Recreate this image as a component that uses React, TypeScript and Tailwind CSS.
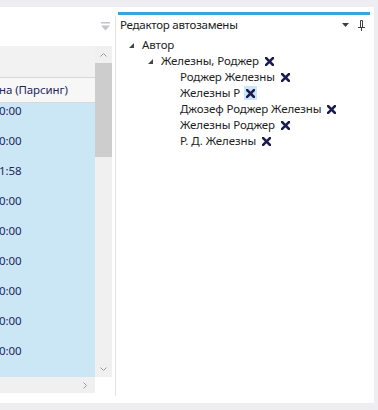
import React from "react";

const font = { fontFamily: '"Noto Sans", "DejaVu Sans", sans-serif' };

const RemoveIcon = () => (
  <svg width="9" height="9" viewBox="0 0 9 9" className="block">
    <path d="M1 1 L8 8 M8 1 L1 8" stroke="#1d1d4e" strokeWidth="2.5" strokeLinecap="square" />
  </svg>
);

const Expander = () => (
  <span className="flex h-[16px] w-[15px] shrink-0 items-center pl-[2px]">
    <svg width="5" height="5" viewBox="0 0 5 5" className="block">
      <polygon points="5,0 5,5 0,5" fill="#444444" />
    </svg>
  </span>
);

type Node = { label: string; level: number; expander?: boolean; remove?: boolean; selected?: boolean };

const nodes: Node[] = [
  { label: "Автор", level: 0, expander: true },
  { label: "Железны, Роджер", level: 1, expander: true, remove: true },
  { label: "Роджер Железны", level: 2, remove: true },
  { label: "Железны Р", level: 2, remove: true, selected: true },
  { label: "Джозеф Роджер Железны", level: 2, remove: true },
  { label: "Железны Роджер", level: 2, remove: true },
  { label: "Р. Д. Железны", level: 2, remove: true },
];

const TreeRow = ({ node }: { node: Node }) => {
  const indent = ["pl-[11px]", "pl-[30px]", "pl-[49px]"][node.level];
  return (
    <div className={`flex h-[16px] items-center ${indent}`}>
      {node.expander ? <Expander /> : <span className="w-[15px] shrink-0" />}
      <span className="whitespace-nowrap text-[11.5px] leading-[16px] tracking-[-0.1px] text-[#1e1e1e]">
        {node.label}
      </span>
      {node.remove && (
        <span
          className={`ml-[4px] flex h-[14px] w-[13px] items-center justify-center ${
            node.selected ? "bg-[#c9e6fb]" : ""
          }`}
        >
          <RemoveIcon />
        </span>
      )}
    </div>
  );
};

const times = ["0:00", "0:00", "1:58", "0:00", "0:00", "0:00", "0:00", "0:00", "0:00"];

const Chevron = ({ dir }: { dir: "up" | "down" | "right" }) => {
  const d =
    dir === "up"
      ? "M0.5 4.5 L3.5 1.5 L6.5 4.5"
      : dir === "down"
      ? "M0.5 1.5 L3.5 4.5 L6.5 1.5"
      : "M1.5 0.5 L4.5 3.5 L1.5 6.5";
  const size = dir === "right" ? { w: 6, h: 7 } : { w: 7, h: 6 };
  return (
    <svg width={size.w} height={size.h} viewBox={`0 0 ${size.w} ${size.h}`} className="block">
      <path d={d} stroke="#9c9c9c" strokeWidth="1" fill="none" />
    </svg>
  );
};

export default function App() {
  return (
    <div className="h-[410px] w-[378px] overflow-hidden bg-[#eeeef2] pt-[7px]" style={font}>
      <div className="flex h-[396px] w-[374px] bg-white">
        {/* left: data grid */}
        <div className="flex w-[115px] shrink-0 flex-col">
          <div className="flex h-[39px] items-start justify-end pr-[5px] pt-[15px]">
            <svg width="9" height="9" viewBox="0 0 9 9" className="block">
              <rect x="0" y="0" width="9" height="1.5" fill="#c4c4cc" />
              <polygon points="0,3.5 9,3.5 4.5,8.5" fill="#c4c4cc" />
            </svg>
          </div>
          <div className="flex h-[331px]">
            <div className="flex w-[95px] flex-col overflow-hidden">
              <div className="h-[31px] bg-[#f2f2f2]" />
              <div className="flex h-[26px] items-center border-y border-[#d9d9d9] bg-[#f7f7f7]">
                <span className="-ml-[1px] whitespace-nowrap text-[11.5px] tracking-[-0.1px] text-[#1e2659]">
                  на (Парсинг)
                </span>
              </div>
              <div className="flex-1 bg-[#cbe7f6]">
                {times.map((t, i) => (
                  <div key={i} className="h-[30px]">
                    <span className="-ml-[1px] block whitespace-nowrap text-[11.5px] leading-[16px] tracking-[-0.1px] text-[#1e2659]">
                      {t}
                    </span>
                  </div>
                ))}
              </div>
            </div>
            <div className="flex w-[17px] flex-col bg-[#f0f0f0]">
              <div className="flex h-[17px] items-center justify-center">
                <Chevron dir="up" />
              </div>
              <div className="h-[94px] bg-[#cdcdcd]" />
              <div className="flex-1" />
              <div className="flex h-[17px] items-center justify-center">
                <Chevron dir="down" />
              </div>
            </div>
          </div>
          <div className="flex h-[16px] w-[95px] items-center justify-end bg-[#f0f0f0] pr-[7px]">
            <Chevron dir="right" />
          </div>
        </div>

        {/* separator */}
        <div className="mb-[7px] mt-[8px] w-px bg-[#e3e3e3]" />

        {/* right: autocorrect editor */}
        <div className="flex flex-1 flex-col pt-[5px]">
          <div className="ml-[2px] mr-[4px] h-[3px] bg-[#3aa2dc]" />
          <div className="mt-[2px] flex h-[16px] items-center pl-[4px] pr-[9px]">
            <span className="flex-1 whitespace-nowrap text-[11.5px] tracking-[-0.25px] text-[#1a1a1a]">
              Редактор автозамены
            </span>
            <svg width="7" height="4" viewBox="0 0 7 4" className="mr-[9px] block">
              <polygon points="0,0 7,0 3.5,4" fill="#3f3f3f" />
            </svg>
            <svg width="7" height="11" viewBox="0 0 7 11" className="block">
              <path d="M2.5 0.5 H4.5 V7 M2.5 0.5 V7 M0 7.5 H7 M3.5 7.5 V11" stroke="#3f3f3f" strokeWidth="1" fill="none" />
            </svg>
          </div>
          <div className="mt-[4px] flex flex-col">
            {nodes.map((n) => (
              <TreeRow key={n.label} node={n} />
            ))}
          </div>
        </div>
      </div>
    </div>
  );
}
